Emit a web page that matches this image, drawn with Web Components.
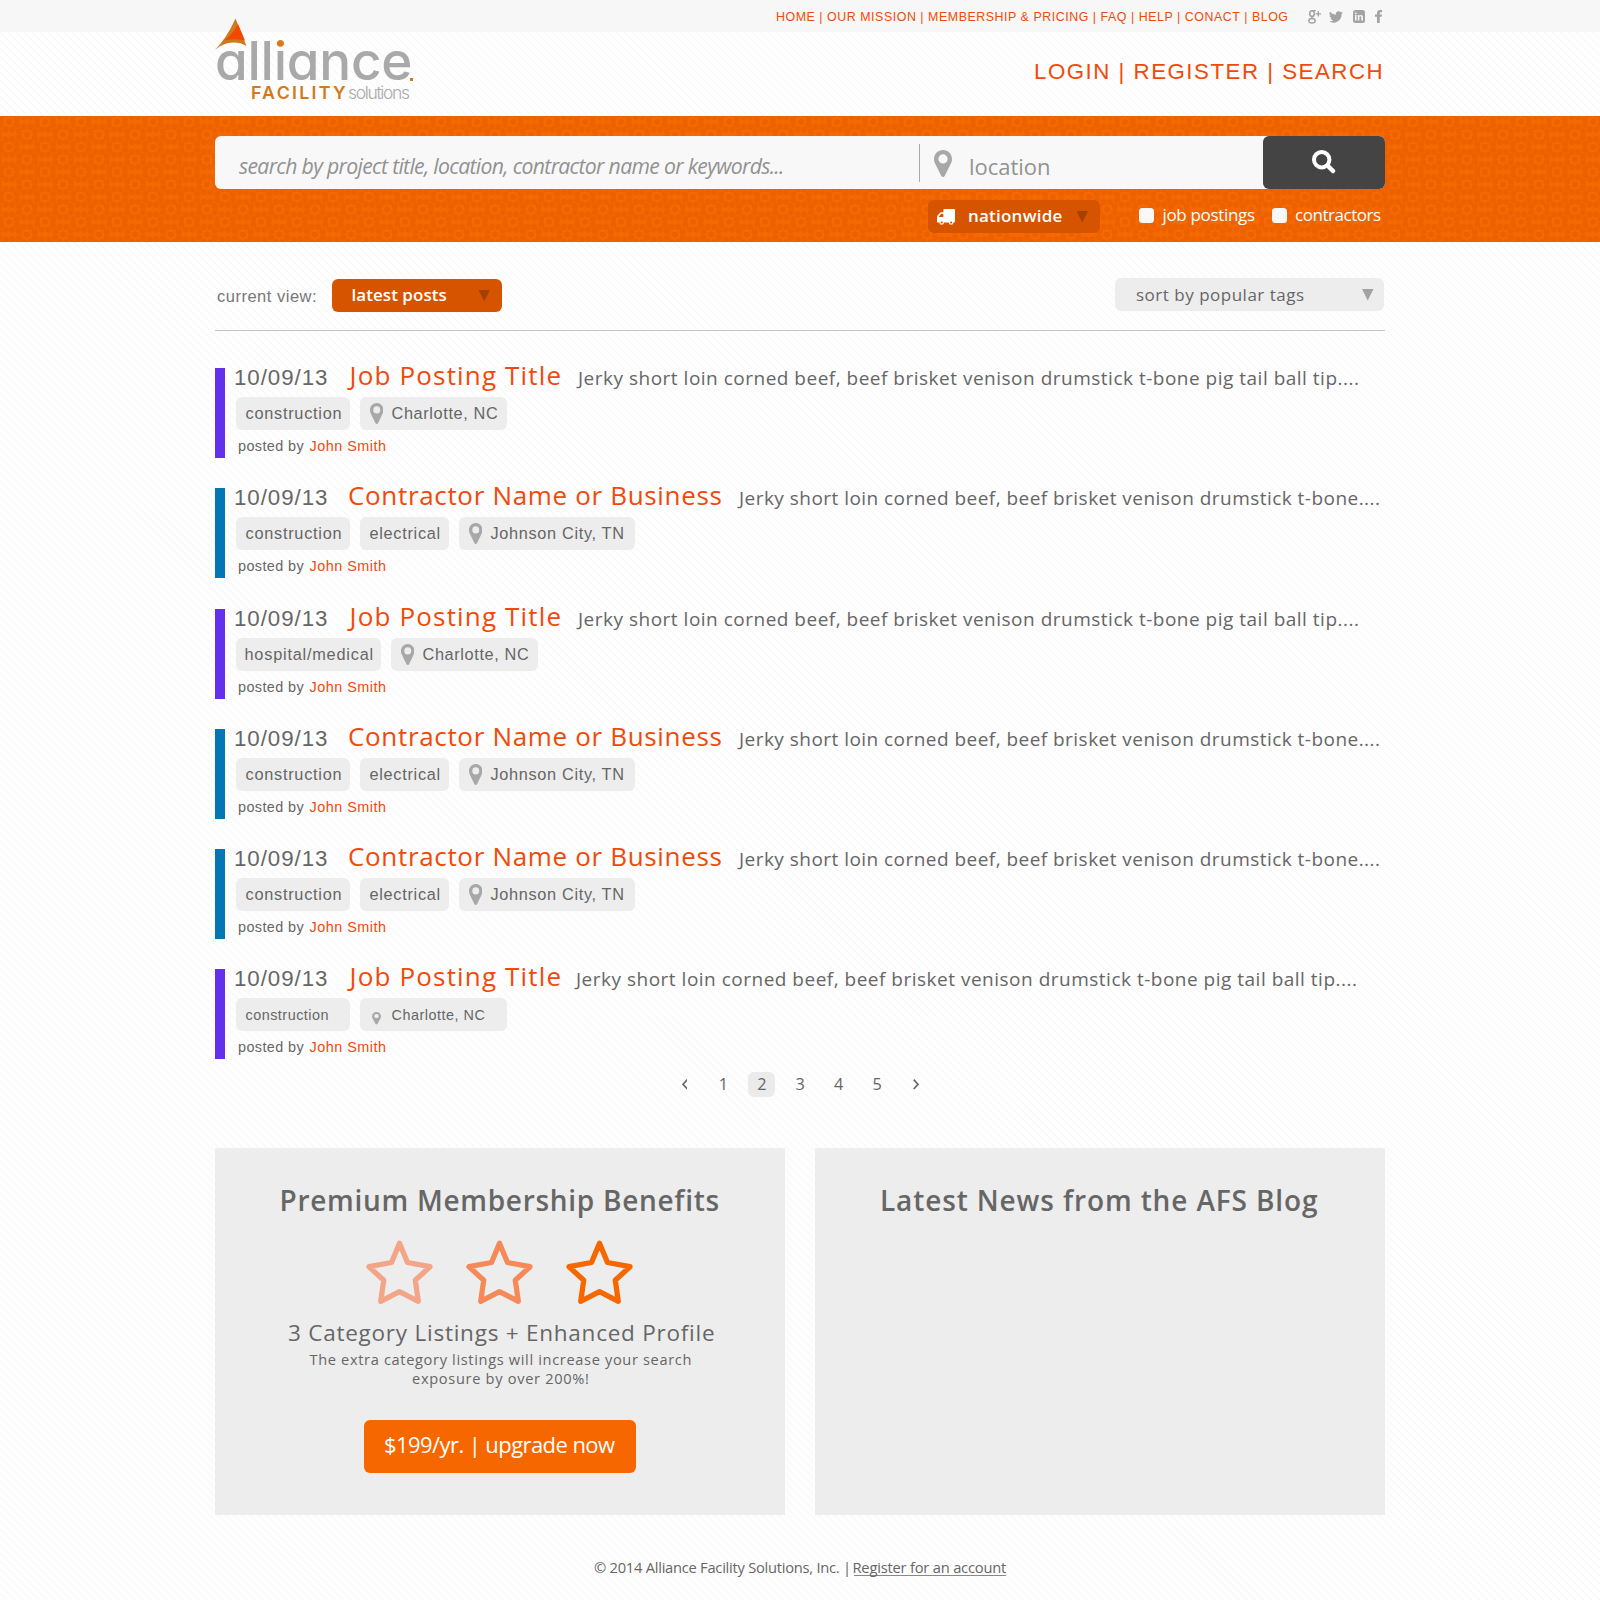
<!DOCTYPE html>
<html lang="en">
<head>
<meta charset="utf-8">
<title>Alliance Facility Solutions</title>
<style>
  html, body { margin: 0; padding: 0; }
  body {
    width: 1600px; height: 1600px; overflow: hidden;
    background: #fdfdfd repeating-linear-gradient(45deg, #fefefe 0 3.9px, #f8f8f8 4.5px 5px, #fefefe 5.66px);
    color: #666; font-family: "Open Sans", "Noto Sans", sans-serif;
  }
</style>
</head>
<body>
<afs-page></afs-page>
<script>
const ARIAL = '"Liberation Sans", Arial, sans-serif';

function define(name, render) {
  customElements.define(name, class extends HTMLElement {
    connectedCallback() {
      if (this.shadowRoot) return;
      this.attachShadow({ mode: 'open' }).innerHTML = render(this);
    }
  });
}

define('map-pin', () => `
  <style>:host{display:block;flex:none;width:18px;height:27px} svg{display:block;width:100%;height:100%}</style>
  <svg viewBox="0 0 18 27" preserveAspectRatio="none"><path fill="#a8a8a8" fill-rule="evenodd" d="M9 0C4 0 0 3.9 0 9c0 2 .5 3.300 1.200 4.800L7.300 25.900c.7 1.400 2.700 1.400 3.400 0L16.800 13.800C17.500 12.300 18 11 18 9 18 3.900 14 0 9 0zM9 4.300a4.600 4.600 0 1 1 0 9.200 4.600 4.600 0 0 1 0-9.200z"/></svg>`);

define('star-icon', el => `
  <style>:host{display:block;width:67px;height:64px} svg{display:block;overflow:visible}</style>
  <svg width="67" height="64" viewBox="0 0 67 64"><path fill="none" stroke="${el.getAttribute('color')}" stroke-width="5.300" stroke-linejoin="round" d="M33.500 3.200L41.500 22.500L64 26.700L49.300 40.300L52.300 61.300L33.500 51.700L14.700 61.300L17.700 40.300L3 26.700L25.500 22.500Z"/></svg>`);

define('site-logo', () => `
  <style>
    :host{display:block;position:relative;width:200px;height:116px;font-family:Inter,sans-serif;color:#a9a9a9}
    .name{padding:39px 0 0 2px;height:44px;font-size:53px;line-height:44px;font-weight:500;font-feature-settings:"cv11"}
    .sub{display:flex;align-items:baseline;padding-left:37px;gap:2px;line-height:20px}
    .f{font-size:17.800px;font-weight:600;color:#d07a1c}
    .s{font-size:17.500px;font-weight:300}
    svg{position:absolute;left:-2px;top:18px}
    .dot{position:absolute;left:195px;top:78px;width:2.500px;height:2.500px;background:#d07a1c}
  </style>
  <div class="name"><fit-text w="188">alliance</fit-text></div>
  <div class="sub"><fit-text class="f" w="94">FACILITY</fit-text><fit-text class="s" w="62">solutions</fit-text></div>
  <svg width="36" height="36" viewBox="0 0 36 36"><path fill="#d07a1c" d="M22.500 0.500L33.500 28C23 22 10 24 0.500 33.500Q14 20 22.500 0.500Z"/><path fill="#f04a00" d="M25 6L32 22.500Q22 20 11.500 22.500Q20 16 25 6Z"/></svg>
  <span class="dot"></span>`);

define('site-header', () => `
  <style>
    :host{display:block;height:116px;background:linear-gradient(#f7f7f7 32px,transparent 32px)}
    .in{width:1170px;margin:0 auto;display:flex;justify-content:space-between}
    .right{display:flex;flex-direction:column;align-items:flex-end;color:#f04a0a;font-family:${ARIAL}}
    .bar{display:flex;height:32px;align-items:flex-start;padding-right:3px}
    .nav{font-size:12.400px;line-height:34px;margin-right:20px}
    .social{display:flex;align-items:flex-start;height:14px;padding-top:10px;fill:#a3a3a3}
    .big{font-size:22.300px;line-height:30px;padding:24.500px 3.500px 0 0}
    svg{display:block}
  </style>
  <div class="in"><site-logo></site-logo>
   <div class="right">
    <div class="bar"><fit-text class="nav" w="511">HOME | OUR MISSION | MEMBERSHIP &amp; PRICING | FAQ | HELP | CONACT | BLOG</fit-text>
     <div class="social">
      <svg width="13" height="14" viewBox="0 0 13 14" style="margin-right:8px"><g fill="none" stroke="#a3a3a3"><ellipse cx="4" cy="3.600" rx="2.300" ry="2.900" stroke-width="1.600"/><path stroke-width="1.200" d="M4 .6H8M5 6.500C3 7.300 4 8 5.500 8.800"/><ellipse cx="4" cy="10.800" rx="3.200" ry="2.300" stroke-width="1.500"/><path stroke-width="1.300" d="M10.300 1V6.600M7.600 3.800H13"/></g></svg>
      <svg width="14" height="12" viewBox="0 0 24 20" style="margin:1px 10px 0 0"><path d="M24 2.400a10 10 0 0 1-2.800.8A5 5 0 0 0 23.300.500a10 10 0 0 1-3.100 1.200 4.900 4.900 0 0 0-8.400 4.500A14 14 0 0 1 1.700 1a4.900 4.900 0 0 0 1.500 6.600 5 5 0 0 1-2.200-.6c0 2.400 1.700 4.400 3.900 4.900a5 5 0 0 1-2.200.1 4.900 4.900 0 0 0 4.600 3.400A10 10 0 0 1 0 17.400 14 14 0 0 0 21.500 5z"/></svg>
      <svg width="12" height="13" viewBox="0 0 12 13" style="margin-right:10px"><path fill-rule="evenodd" d="M2.500 0h7A2.500 2.500 0 0 1 12 2.500v8A2.500 2.500 0 0 1 9.500 13h-7A2.500 2.500 0 0 1 0 10.500v-8A2.500 2.500 0 0 1 2.500 0zM2 5v5.500h1.600V5zM2.800 2.400a.9.9 0 1 0 0 1.800.9.9 0 0 0 0-1.800zM4.800 5v5.500h1.600V7.400c0-1.400 1.900-1.500 1.900 0v3.100H10V7c0-2.400-2.500-2.700-3.600-1.200V5z"/></svg>
      <svg width="7" height="13" viewBox="0 0 7 13"><path d="M7 0v2.200H5.700c-.8 0-1 .4-1 1V4.500H7L6.700 6.800h-2V13H2V6.800H0V4.500h2V2.900C2 1 3.200 0 5 0z"/></svg>
     </div></div>
    <div class="big"><fit-text w="346.500">LOGIN | REGISTER | SEARCH</fit-text></div>
   </div></div>`);

define('drop-select', () => `
  <style>
    :host{display:flex;box-sizing:border-box;height:33px;border-radius:6px;background:var(--bg);color:var(--fg);font-size:17px;font-weight:550;line-height:31px;padding:0 11.500px 0 21px}
    .tri{margin:11px 0 0 auto;width:11.500px;height:11.500px;background:var(--arrow);clip-path:polygon(0 0,100% 0,50% 100%)}
  </style><slot></slot><span class="tri"></span>`);

define('check-box', () => `
  <style>:host{display:flex;gap:8px;color:#fff;font-size:17px;font-weight:500;line-height:30px}
  .b{width:15px;height:15px;border-radius:3.500px;background:#f8f8f8;margin-top:8px}</style>
  <span class="b"></span><slot></slot>`);

define('search-band', () => {
  const ring = (cx, cy) => Array.from({ length: 8 }, (_, i) => {
    const a = i * Math.PI / 4 + Math.PI / 8;
    return `<circle cx="${(cx + 8.6 * Math.cos(a)).toFixed(1)}" cy="${(cy + 8.2 * Math.sin(a)).toFixed(1)}" r="3.100"/>`;
  }).join('') + `<circle cx="${cx}" cy="${cy}" r="2.900"/>`;
  return `
  <style>
    :host{display:grid;height:126px}
    :host>*{grid-area:1/1}
    .bg{display:block;width:100%;height:126px}
    .in{width:1170px;margin:0 auto;padding-top:20px;position:relative}
    .field{display:flex;height:53px;background:#f8f8f8;border-radius:6px;color:#929292;box-sizing:border-box;padding-left:24px}
    .q{font-size:21.200px;font-style:italic;line-height:60px}
    .sep{width:1px;height:38px;background:#aaa;margin:8px 14px 0 137px}
    map-pin{margin-top:14px}
    .loc{font-size:22px;line-height:60px;margin-left:18px}
    button{all:unset;margin-left:auto;width:122px;height:53px;border-radius:6px;background:#444;display:flex;justify-content:center}
    button svg{margin:13.500px 0 0 0}
    .opts{display:flex;padding:11px 4px 0 0;justify-content:flex-end}
    drop-select{--bg:#d65400;--fg:#fff;--arrow:#a54100;width:172px;padding-left:9px;margin-right:39px}
    .truck{margin:9px 14.500px 0 0}
    check-box + check-box{margin-left:17px}
  </style>
  <svg class="bg"><defs><pattern id="p" width="36" height="25" patternUnits="userSpaceOnUse"><rect width="36" height="25" fill="#f66800"/><g fill="#ed6200">${ring(9, 6)}${ring(45, 6)}${ring(27, 18.5)}${ring(-9, 18.5)}${ring(27, -6.5)}${ring(9, 31)}</g></pattern></defs><rect width="100%" height="100%" fill="url(#p)"/></svg>
  <div class="in">
    <div class="field"><fit-text class="q" w="543">search by project title, location, contractor name or keywords...</fit-text>
      <span class="sep"></span><map-pin></map-pin><fit-text class="loc" w="79">location</fit-text>
      <button><svg width="24" height="24" viewBox="0 0 24 24" fill="none" stroke="#fff"><circle cx="9.700" cy="9.700" r="7.700" stroke-width="4"/><path d="M15.500 15.500L21 21" stroke-width="4.500" stroke-linecap="round"/></svg></button></div>
    <div class="opts">
      <drop-select><svg class="truck" width="18" height="16" viewBox="0 0 18 16"><path fill="#fff" fill-rule="evenodd" d="M7.500 0H17a1 1 0 0 1 1 1v11.500a1 1 0 0 1-1 1h-.600a2.300 2.300 0 0 1-4.600 0H7a2.300 2.300 0 0 1-4.600 0H.8c-.6 0-.8-.4-.8-.8V8.500c0-1 .2-1.500.8-2.200L2.800 4c.5-.5.9-.7 1.600-.7h2V1c0-.6.500-1 1.100-1zM6.300 4.800H4.600c-.3 0-.4.1-.6.300L2 7.500v.6h4.300zM4.700 12.400a1.100 1.100 0 1 0 0 2.200 1.100 1.100 0 0 0 0-2.200zM14.100 12.400a1.100 1.100 0 1 0 0 2.200 1.100 1.100 0 0 0 0-2.200z"/></svg><fit-text w="92.500">nationwide</fit-text></drop-select>
      <check-box><fit-text w="93.500">job postings</fit-text></check-box>
      <check-box><fit-text w="86">contractors</fit-text></check-box>
    </div></div>`;
});

define('view-bar', () => `
  <style>
    :host{display:flex;box-sizing:border-box;height:89px;padding-top:36px;border-bottom:1px solid #c4c4c4}
    .cv{font:16.500px/36px ${ARIAL};color:#777;margin:0 15.500px 0 2px}
    .a{--bg:#d65400;--fg:#fff;--arrow:#a54100;width:170px;margin-top:1px}
    .b{--bg:#ededed;--fg:#666;--arrow:#a3a3a3;width:269px;margin:0 1px 0 auto;line-height:33px;padding:0 10.500px 0 21px}
    .b fit-text{font-weight:500}
  </style>
  <fit-text class="cv" w="99">current view:</fit-text>
  <drop-select class="a"><fit-text w="94">latest posts</fit-text></drop-select>
  <drop-select class="b"><fit-text w="168">sort by popular tags</fit-text></drop-select>`);

define('tag-pill', () => `
  <style>
    :host{display:flex;box-sizing:border-box;height:33px;border-radius:6px;background:#ededed;padding:0 0 0 9.500px;font:16.300px/33px ${ARIAL}}
  </style><slot></slot>`);

define('job-item', el => {
  const biz = el.hasAttribute('business'), small = el.hasAttribute('small');
  const tags = el.getAttribute('tags').split(';').map(t => t.split(','));
  const [place, pw, tw] = el.getAttribute('place').split(';');
  return `
  <style>
    :host{display:flex;height:90px;border-left:10px solid ${biz ? '#0376b6' : '#6430ee'}}
    .c{padding-left:11px;flex:1}
    .t{display:flex;align-items:baseline;height:35px;margin:-6px 0 0 -1px;white-space:nowrap}
    .date{font:22.300px/24px ${ARIAL}}
    .title{font-size:26px;line-height:26px;color:#f04a0a;margin:0 ${small ? 13.5 : 15.5}px 0 ${biz ? 22 : 19.5}px}
    .txt{font-size:19px;line-height:24px}
    .tags{display:flex;gap:10px}
    tag-pill map-pin{width:13.500px;height:21px;margin:6px 8.500px 0 0}
    .by{display:flex;gap:5px;padding-left:2px;font:14.400px/18px ${ARIAL};margin-top:7px}
    .by .n{color:#f04a0a}
    ${small ? 'tag-pill{font-size:14.400px;line-height:34px} tag-pill map-pin{width:9px;height:12.500px;margin:14px 11px 0 2px}' : ''}
  </style>
  <div class="c">
    <div class="t"><fit-text class="date" w="92">10/09/13</fit-text>
    <fit-text class="title" w="${biz ? 372.5 : 214}">${biz ? 'Contractor Name or Business' : 'Job Posting Title'}</fit-text>
    <fit-text class="txt" w="${biz ? 642 : 782}">Jerky short loin corned beef, beef brisket venison drumstick t-bone${biz ? '....' : ' pig tail ball tip....'}</fit-text></div>
    <div class="tags">${tags.map(([n, w, f]) => `<tag-pill style="width:${w}px"><fit-text w="${f}">${n}</fit-text></tag-pill>`).join('')}
      <tag-pill style="width:${pw}px"><map-pin></map-pin><fit-text w="${tw}">${place}</fit-text></tag-pill></div>
    <div class="by"><fit-text w="66.500">posted by</fit-text><fit-text class="n" w="76.500">John Smith</fit-text></div>
  </div>`;
});

define('page-nav', () => `
  <style>
    :host{display:flex;width:237px;margin:0 auto;font-size:16.300px;line-height:25px;height:25px;font-weight:500}
    span{width:27px;text-align:center;border-radius:6px;margin-right:11.500px;text-indent:1px}
    .on{background:#ebebeb}
    svg{display:block;margin:7px 22px 0 0}
    span + svg{margin:7px 0 0 11px}
  </style>
  <svg width="6" height="11" fill="none" stroke="#666" stroke-width="1.700"><path d="M5.300.6L1 5.300L5.300 10"/></svg>
  <span>1</span><span class="on">2</span><span>3</span><span>4</span><span>5</span>
  <svg width="6" height="11" fill="none" stroke="#666" stroke-width="1.700"><path d="M.7.6L5 5.300L.7 10"/></svg>`);

define('info-card', () => `
  <style>
    :host{display:flex;flex-direction:column;align-items:center;width:570px;height:367px;background:#ededed}
    .h{font-size:28px;font-weight:600;line-height:36px;margin-top:34px}
  </style><div class="h"><slot name="title"></slot></div><slot></slot>`);

define('plan-offer', () => `
  <style>
    :host{display:flex;flex-direction:column;align-items:center}
    .stars{display:flex;gap:33px;margin:22px 1px 0 0}
    .l{font-size:22.500px;line-height:28px;margin:15px 0 0 3px}
    .s{font-size:14.600px;line-height:19px;font-weight:500}
    .s1{margin-top:3px}
    .btn{width:272px;height:53px;border-radius:6px;background:#f76700;color:#fff;display:flex;justify-content:center;font-size:22px;line-height:49px;margin-top:32px}
  </style>
  <div class="stars"><star-icon color="#f3a587"></star-icon><star-icon color="#f58a58"></star-icon><star-icon color="#f76700"></star-icon></div>
  <fit-text class="l" w="425">3 Category Listings + Enhanced Profile</fit-text>
  <fit-text class="s s1" w="381">The extra category listings will increase your search</fit-text>
  <fit-text class="s" w="176">exposure by over 200%!</fit-text>
  <div class="btn"><fit-text w="230">$199/yr. | upgrade now</fit-text></div>`);

define('site-footer', () => `
  <style>
    :host{display:flex;justify-content:center;gap:5.500px;font-size:14.700px;line-height:20px;margin-top:42px}
    .u{box-shadow:0 1px 0 #888;height:18px}
  </style><fit-text w="254">© 2014 Alliance Facility Solutions, Inc. |</fit-text><fit-text class="u" w="152.500">Register for an account</fit-text>`);

define('afs-page', () => `
  <style>
    :host{display:block;width:1600px}
    main{width:1170px;margin:0 auto}
    .list{display:grid;gap:30px;padding-top:37px}
    .list job-item:nth-child(3){margin-top:1px}
    page-nav{margin-top:13px}
    .cards{display:flex;gap:30px;margin-top:51px}
  </style>
  <site-header></site-header>
  <search-band></search-band>
  <main>
    <view-bar></view-bar>
    <div class="list">
      <job-item tags="construction,114,95" place="Charlotte, NC;147;106.5"></job-item>
      <job-item business tags="construction,114,95;electrical,89,70" place="Johnson City, TN;176;133"></job-item>
      <job-item tags="hospital/medical,145,127" place="Charlotte, NC;147;106.5"></job-item>
      <job-item business tags="construction,114,95;electrical,89,70" place="Johnson City, TN;176;133"></job-item>
      <job-item business tags="construction,114,95;electrical,89,70" place="Johnson City, TN;176;133"></job-item>
      <job-item small tags="construction,114,83" place="Charlotte, NC;147;93"></job-item>
    </div>
    <page-nav></page-nav>
    <div class="cards">
      <info-card><fit-text slot="title" w="437">Premium Membership Benefits</fit-text><plan-offer></plan-offer></info-card>
      <info-card><fit-text slot="title" w="436">Latest News from the AFS Blog</fit-text></info-card>
    </div>
  </main>
  <site-footer></site-footer>`);

/* Tracks a single line of text so its ink spans exactly `w` pixels. */
const ctx = document.createElement('canvas').getContext('2d');
customElements.define('fit-text', class extends HTMLElement {
  connectedCallback() {
    if (this.shadowRoot) return;
    const text = this.textContent;
    const word = text === 'alliance';
    const cs = getComputedStyle(this);
    const w = parseFloat(this.getAttribute('w'));
    ctx.font = `${cs.fontStyle} ${cs.fontWeight} ${cs.fontSize} ${cs.fontFamily}`;
    const m = ctx.measureText(text);
    const left = -m.actualBoundingBoxLeft;
    const ls = (w - (m.actualBoundingBoxRight - left)) / (text.length - 1);
    this.attachShadow({ mode: 'open' }).innerHTML = `<style>
        :host{display:block;flex:none;width:${w}px}
        span{display:block;white-space:pre;width:max-content;margin-left:${-left}px;margin-right:-20px;letter-spacing:${ls}px;font-variant-ligatures:none}
        i{font-style:normal;background:linear-gradient(#d8791b 0 22px,#a9a9a9 22px);-webkit-background-clip:text;background-clip:text;color:transparent}
      </style><span>${word ? 'all<i>i</i>ance' : '<slot></slot>'}</span>`;
  }
});
</script>
</body>
</html>
